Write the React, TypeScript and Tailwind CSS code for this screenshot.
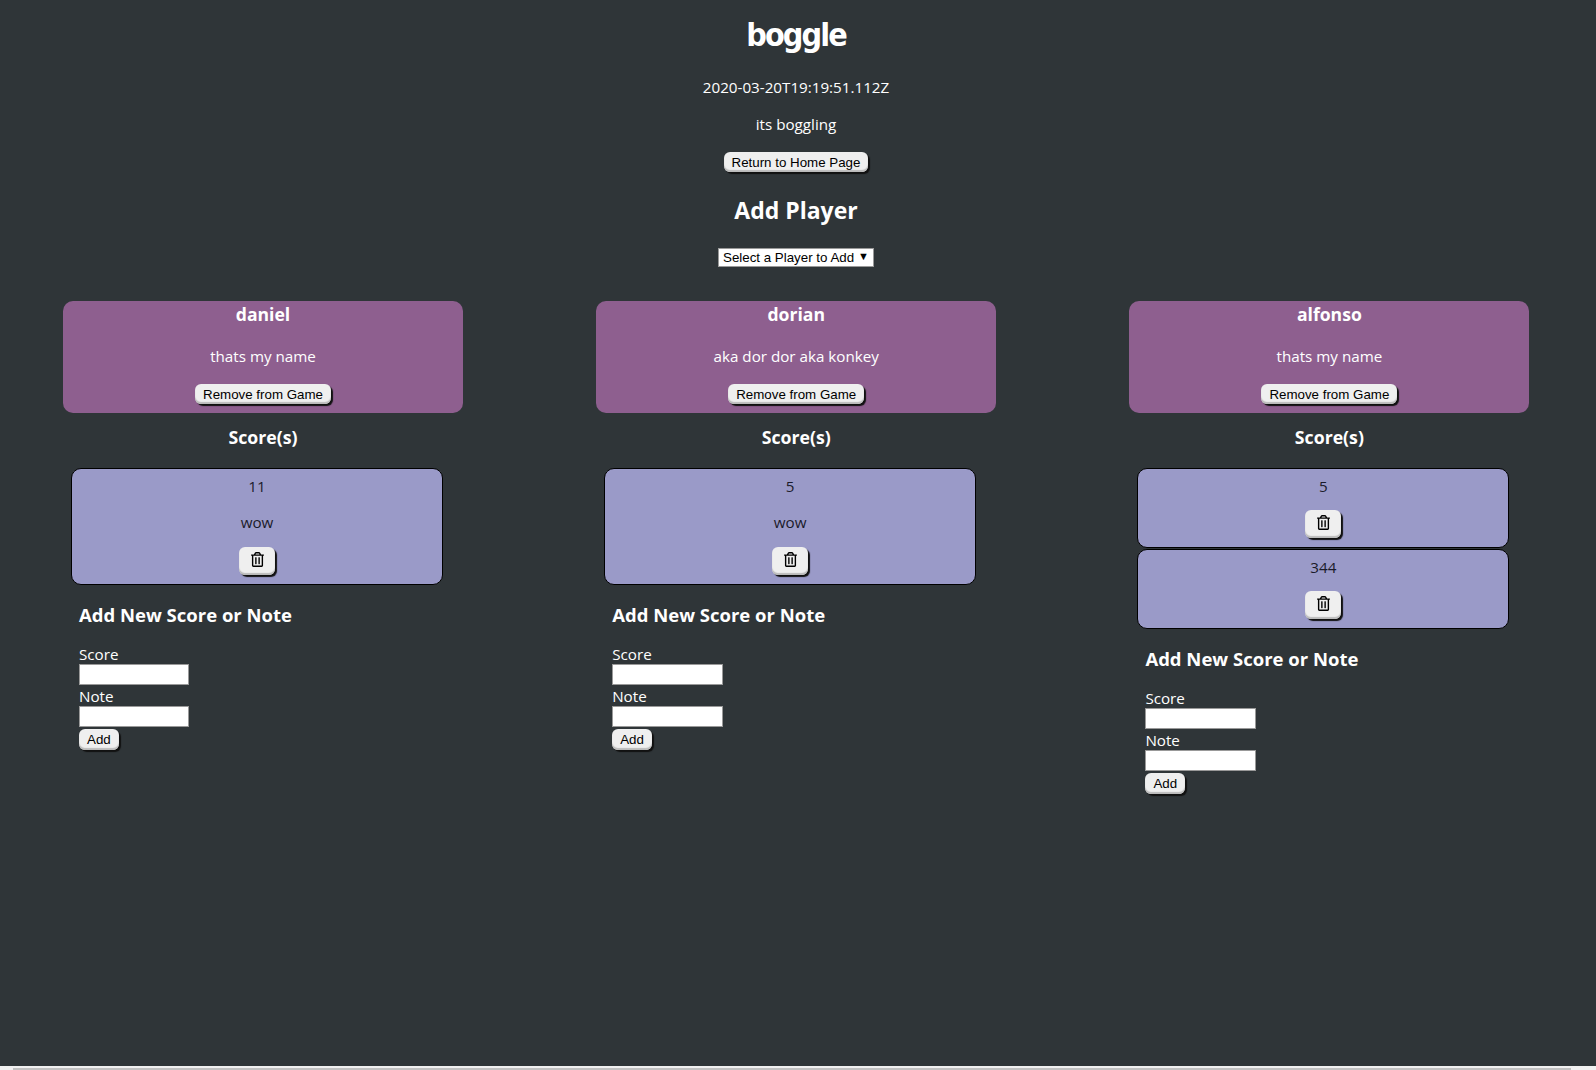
import { FaRegTrashAlt } from "react-icons/fa";

const btn =
  "bg-[#efefef] text-black rounded-[6px] shadow-[2px_2px_1px_#111,inset_0_-2px_1px_#bbb] font-['Liberation_Sans',sans-serif] text-[13.33px] leading-[15px]";

type Score = { value: string; note?: string };
type Player = { name: string; bio: string; scores: Score[] };

const players: Player[] = [
  { name: "daniel", bio: "thats my name", scores: [{ value: "11", note: "wow" }] },
  { name: "dorian", bio: "aka dor dor aka konkey", scores: [{ value: "5", note: "wow" }] },
  { name: "alfonso", bio: "thats my name", scores: [{ value: "5" }, { value: "344" }] },
];

function ScoreCard({ score }: { score: Score }) {
  return (
    <div className="mb-[1px] flex flex-col items-center rounded-[10px] border border-black bg-[#9a9ac8] pt-[6px] pb-[9px] text-[#1a1a2a]">
      <p className="h-[24px] leading-[22px]">{score.value}</p>
      {score.note && <p className="mt-[12px] h-[24px] leading-[22px]">{score.note}</p>}
      <button
        className={`${btn} ${score.note ? "mt-[12px]" : "mt-[11px]"} flex h-[28px] w-[36px] items-center justify-center`}
      >
        <FaRegTrashAlt className="mb-[3px] h-[15px] w-[13px]" />
      </button>
    </div>
  );
}

function PlayerColumn({ player }: { player: Player }) {
  return (
    <div className="w-[400px]">
      <div className="flex h-[112px] flex-col items-center rounded-[10px] bg-[#8e5f8f]">
        <h3 className="mt-[1px] h-[24px] text-[17.6px] leading-[24px] font-bold">{player.name}</h3>
        <p className="mt-[19px] h-[24px] leading-[22px]">{player.bio}</p>
        <button className={`${btn} mt-[15px] h-[20px] px-[8px]`}>Remove from Game</button>
      </div>
      <h3 className="mt-[13px] h-[24px] text-center text-[17.7px] leading-[22px] font-bold">Score(s)</h3>
      <div className="mt-[18px] ml-[8px] w-[372px]">
        {player.scores.map((s, i) => (
          <ScoreCard key={i} score={s} />
        ))}
      </div>
      <div className="mt-[18px] ml-[16px]">
        <h3 className="h-[24px] text-[18.5px] leading-[24px] font-bold">Add New Score or Note</h3>
        <label className="mt-[16px] block h-[21px] leading-[23px]">Score</label>
        <input className="block h-[21px] w-[110.4px] border border-[#999] bg-white" />
        <label className="block h-[21px] leading-[23px]">Note</label>
        <input className="block h-[21px] w-[110.4px] border border-[#999] bg-white" />
        <button className={`${btn} mt-[2px] block h-[21px] px-[8px]`}>Add</button>
      </div>
    </div>
  );
}

export default function App() {
  return (
    <div className="flex h-screen flex-col overflow-hidden bg-[#2f3538] font-['Open_Sans','Noto_Sans',sans-serif] text-[15.2px] text-white">
      <div className="flex-1">
        <div className="flex flex-col items-center pr-[4px]">
          <h1 className="mt-[17px] h-[37px] font-['DejaVu_Sans',sans-serif] text-[32px] leading-[37px] font-bold tracking-[-1.9px] font-stretch-condensed">
            boggle
          </h1>
          <p className="mt-[21px] h-[24px] leading-[24px]">2020-03-20T19:19:51.112Z</p>
          <p className="mt-[13px] h-[24px] leading-[24px]">its boggling</p>
          <button className={`${btn} mt-[16px] h-[20px] px-[8px]`}>Return to Home Page</button>
          <h2 className="mt-[22px] h-[32px] text-[23px] leading-[32px] font-bold">Add Player</h2>
          <div className="relative mt-[22px]">
            <select className="block h-[19px] w-[156px] appearance-none border border-[#999] bg-white pl-[4px] font-['Liberation_Sans',sans-serif] text-[13.33px] leading-[15px] text-black">
              <option>Select a Player to Add</option>
            </select>
            <span className="absolute top-[1px] right-[5px] text-[11px] leading-[14px] text-black">▼</span>
          </div>
        </div>
        <div className="mt-[34px] flex gap-[133.2px] pl-[63px]">
          {players.map((p) => (
            <PlayerColumn key={p.name} player={p} />
          ))}
        </div>
      </div>
      <div className="flex h-[4px] bg-[#f1f1f1] pt-[2px] pr-[25px] pl-[13px]">
        <div className="flex-1 bg-[#c1c1c1]" />
      </div>
    </div>
  );
}
